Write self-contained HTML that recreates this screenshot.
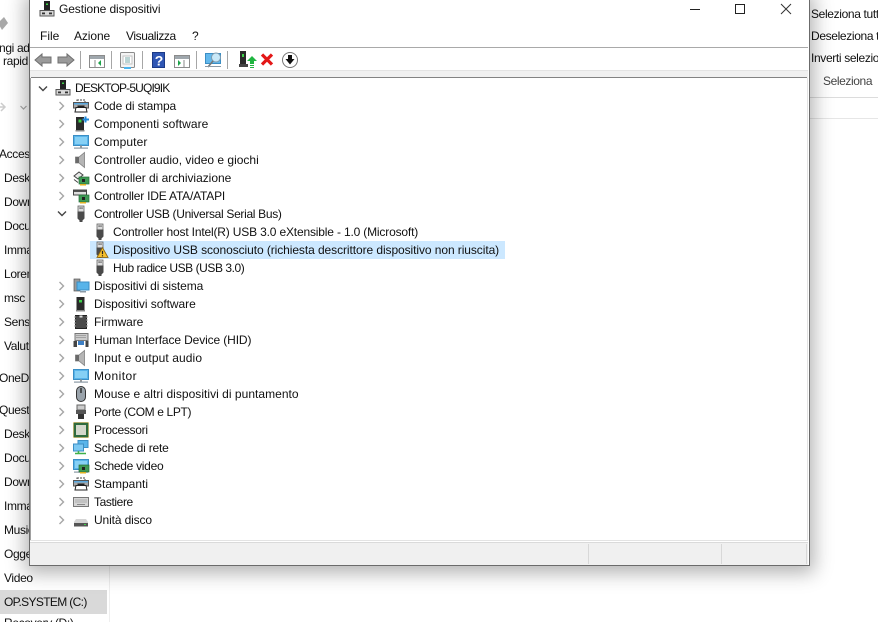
<!DOCTYPE html>
<html><head><meta charset="utf-8"><style>
html{margin:0;padding:0;background:#fff;width:878px;height:622px;overflow:hidden}
body{margin:0;padding:0;background:#fff}
#page{width:878px;height:622px;overflow:hidden;position:relative;font-family:"Liberation Sans",sans-serif;font-size:12px;color:#111}
.a{position:absolute;white-space:nowrap}
.t{position:absolute;white-space:nowrap;line-height:16px}
.l{letter-spacing:-.35px}
#win{position:absolute;left:29px;top:-5px;width:779px;height:569px;background:#fff;border:1px solid #6b6b6b;box-shadow:0 3px 18px 4px rgba(0,0,0,.3)}
svg{position:absolute;overflow:visible}
</style></head><body><div id="page">
<svg width="0" height="0" style="position:absolute"><defs>
<symbol id="pc" viewBox="0 0 16 16" overflow="visible"><rect x="5" y="0" width="6" height="9" fill="#222"/><rect x="7" y="2.500" width="2" height="1.500" fill="#3fd04a"/><path d="M1 9.500h14v5.500H1z" fill="#d8d8d8" stroke="#555"/><rect x="3" y="11.500" width="3" height="1.800" fill="#333"/><rect x="10" y="11.500" width="3" height="1.800" fill="#333"/></symbol>
<symbol id="printer" viewBox="0 0 16 16" overflow="visible"><rect x="4" y="2" width="8" height="3" fill="#fff" stroke="#444" stroke-dasharray="2 1"/><rect x=".5" y="4.500" width="15" height="5.500" fill="#a8a8a8" stroke="#555"/><rect x="1" y="5" width="14" height="1.500" fill="#5aa7dd"/><path d="M3 9.500h10l1 4.500H2z" fill="#fff" stroke="#222"/><rect x="4.500" y="7.500" width="7" height="2" fill="#222"/></symbol>
<symbol id="sw" viewBox="0 0 16 16" overflow="visible"><rect x="3" y="1" width="8" height="13" fill="#2a2a2a"/><rect x="5.500" y="3.500" width="3" height="3" fill="#3fd04a"/><rect x="2.500" y="14" width="9" height="1.500" fill="#888"/><path d="M12.500 .5v6M9.500 3.500h6.500" stroke="#1e88d8" stroke-width="2"/></symbol>
<symbol id="mon" viewBox="0 0 16 16" overflow="visible"><rect x=".5" y="1.500" width="15" height="10" fill="#58b4ea" stroke="#3b8ec4"/><rect x="2" y="3" width="12" height="7" fill="#86d0f5"/><rect x="7" y="11.500" width="2" height="2" fill="#9a9a9a"/><rect x="1" y="13.500" width="14" height="1.200" fill="#8b9aa6"/></symbol>
<symbol id="spk" viewBox="0 0 16 16" overflow="visible"><path d="M2.500 5h3.500L11.500 .5v15L6 11H2.500z" fill="#b5b5b5" stroke="#808080" stroke-width=".8"/><rect x="2.500" y="5" width="3.500" height="6" fill="#6a6a6a"/></symbol>
<symbol id="card" viewBox="0 0 16 16" overflow="visible"><rect x="6" y="7" width="10" height="7" fill="#3f9a55" stroke="#246b37" stroke-width=".7"/><rect x="9" y="9" width="3" height="3" fill="#222"/><rect x="7" y="14" width="6" height="1.500" fill="#e0b020"/></symbol>
<symbol id="stor" viewBox="0 0 16 16" overflow="visible"><path d="M1 6l5-4 4 3-5 4z" fill="#e8e8e8" stroke="#444"/><path d="M1 9.500l4 3" stroke="#444"/><use href="#card"/></symbol>
<symbol id="ide" viewBox="0 0 16 16" overflow="visible"><rect x=".5" y="2" width="13" height="5" fill="#dfdfdf" stroke="#444"/><rect x="1" y="2.500" width="12" height="1.500" fill="#555"/><use href="#card"/></symbol>
<symbol id="usb" viewBox="0 0 16 16" overflow="visible"><rect x="5" y="0" width="6" height="6" fill="#ddd" stroke="#666" stroke-width=".8"/><rect x="6.500" y="1.500" width="1.200" height="1.200" fill="#333"/><rect x="8.400" y="1.500" width="1.200" height="1.200" fill="#333"/><path d="M4.500 5.500h7v7l-2 2v1.500h-3V14.500l-2-2z" fill="#4a4a4a"/></symbol>
<symbol id="warn" viewBox="0 0 10 10" overflow="visible"><path d="M5 .5L10 9.500H0z" fill="#f6c02c" stroke="#8a6410" stroke-width=".8"/><path d="M5 3.500v3M5 7.500v1" stroke="#222" stroke-width="1.100"/></symbol>
<symbol id="sys" viewBox="0 0 16 16" overflow="visible"><rect x="1" y="1" width="6" height="12" fill="#9a9a9a" stroke="#555" stroke-width=".7"/><rect x="4" y="4" width="12" height="8" fill="#58b4ea" stroke="#3b8ec4"/><rect x="7" y="13" width="6" height="1.500" fill="#8b9aa6"/></symbol>
<symbol id="sd" viewBox="0 0 16 16" overflow="visible"><rect x="3.500" y="1" width="8" height="13" fill="#2a2a2a"/><rect x="6" y="4" width="3" height="2.500" fill="#3fd04a"/><rect x="3" y="14" width="9" height="1.500" fill="#888"/></symbol>
<symbol id="fw" viewBox="0 0 16 16" overflow="visible"><rect x="2.500" y="1.500" width="11" height="13" fill="#4a4a4a" stroke="#222"/><path d="M1 3h14M1 6h14M1 9h14M1 12h14" stroke="#aaa" stroke-dasharray="2 10"/><path d="M6.500 1.500h3v2h-3z" fill="#ddd"/></symbol>
<symbol id="hid" viewBox="0 0 16 16" overflow="visible"><rect x="2" y="1.500" width="13" height="7" fill="#ccc" stroke="#777"/><path d="M3.500 3.500h10M3.500 5.500h10" stroke="#777" stroke-dasharray="1 1"/><rect x=".5" y="9" width="3.500" height="6" fill="#444"/><rect x="12.500" y="9" width="3" height="6" fill="#444"/><rect x="5" y="9" width="6" height="4" fill="#3d7fc4"/></symbol>
<symbol id="mouse" viewBox="0 0 16 16" overflow="visible"><rect x="3.500" y=".5" width="9" height="15" rx="4.500" fill="#9aa3ab" stroke="#333"/><path d="M8 2v5" stroke="#333" stroke-width="1.500"/></symbol>
<symbol id="port" viewBox="0 0 16 16" overflow="visible"><rect x="4" y="1" width="8" height="5" fill="#ccc" stroke="#666"/><path d="M3 6h10v4H3z" fill="#555"/><path d="M5 10h6v5H5z" fill="#333"/></symbol>
<symbol id="cpu" viewBox="0 0 16 16" overflow="visible"><rect x=".5" y=".5" width="15" height="15" fill="#2f6b3e" stroke="#c9a43c" stroke-dasharray="1 1"/><rect x="3" y="3" width="10" height="10" fill="#d4d8cc"/></symbol>
<symbol id="net" viewBox="0 0 16 16" overflow="visible"><rect x="5" y=".5" width="10" height="7" fill="#58b4ea" stroke="#3b8ec4"/><rect x=".5" y="4" width="10" height="7" fill="#7cc8f2" stroke="#3b8ec4"/><path d="M5.500 11v2M2 13.500h11" stroke="#3fb04a" stroke-width="1.600"/></symbol>
<symbol id="vid" viewBox="0 0 16 16" overflow="visible"><use href="#mon"/><use href="#card"/></symbol>
<symbol id="kbd" viewBox="0 0 16 16" overflow="visible"><rect x=".5" y="3.500" width="15" height="9" fill="#d6d6d6" stroke="#777"/><path d="M2.500 6h11M2.500 8h11" stroke="#888" stroke-dasharray="1 1"/><path d="M4 10.500h8" stroke="#888"/></symbol>
<symbol id="disk" viewBox="0 0 16 16" overflow="visible"><path d="M3 7h10l2 3v4H1v-4z" fill="#d4d4d4"/><rect x="1" y="11" width="14" height="3.500" fill="#555"/><rect x="11" y="12" width="2" height="1" fill="#3fd04a"/></symbol>
<symbol id="cr" viewBox="0 0 8 10" overflow="visible"><path d="M1.500 1l4 4-4 4" fill="none" stroke="#a6a6a6" stroke-width="1.400"/></symbol>
<symbol id="cd" viewBox="0 0 10 8" overflow="visible"><path d="M1 1.500l4 4 4-4" fill="none" stroke="#444" stroke-width="1.400"/></symbol>
</defs></svg>

<!-- background explorer -->
<div class="a" style="left:810px;top:97px;width:68px;height:1px;background:#dcdcdc"></div>
<div class="a" style="left:810px;top:118px;width:68px;height:1px;background:#e6e6e6"></div>
<div class="a" style="left:109px;top:566px;width:1px;height:56px;background:#eee"></div>
<div class="a" style="left:0;top:590px;width:107px;height:24px;background:#d9d9d9"></div>
<svg style="left:0;top:10px" width="24" height="24"><path d="M-2 13l6-6 4 6-6 7z" fill="#a8a8a8"/></svg>
<svg style="left:0;top:100px" width="30" height="16"><path d="M-3 7h8M1 3l4 4-4 4" fill="none" stroke="#ccc" stroke-width="1.500"/><path d="M20.500 6l3 3 3-3" fill="none" stroke="#aaa" stroke-width="1.200"/></svg>
<div class="t l" style="left:-1px;top:40px">ngi ad</div>
<div class="t l" style="left:3px;top:53px">rapid</div>
<div class="t l" style="left:-1px;top:146px">Access</div>
<div class="t l" style="left:4px;top:170px">Desktop</div>
<div class="t l" style="left:4px;top:194px">Download</div>
<div class="t l" style="left:4px;top:218px">Documenti</div>
<div class="t l" style="left:4px;top:242px">Immagini</div>
<div class="t l" style="left:4px;top:266px">Lorem</div>
<div class="t l" style="left:4px;top:290px">msc</div>
<div class="t l" style="left:4px;top:314px">Sensori</div>
<div class="t l" style="left:4px;top:338px">Valutazioni</div>
<div class="t l" style="left:-1px;top:370px">OneDrive</div>
<div class="t l" style="left:-1px;top:402px">Questo PC</div>
<div class="t l" style="left:4px;top:426px">Desktop</div>
<div class="t l" style="left:4px;top:450px">Documenti</div>
<div class="t l" style="left:4px;top:474px">Download</div>
<div class="t l" style="left:4px;top:498px">Immagini</div>
<div class="t l" style="left:4px;top:522px">Musica</div>
<div class="t l" style="left:4px;top:546px">Oggetti 3D</div>
<div class="t l" style="left:4px;top:570px">Video</div>
<div class="t" style="left:4px;top:594px;letter-spacing:-.65px">OP.SYSTEM (C:)</div>
<div class="t l" style="left:4px;top:615px">Recovery (D:)</div>
<div class="t l" style="left:811px;top:6px">Seleziona tutto</div>
<div class="t l" style="left:811px;top:28px">Deseleziona tutto</div>
<div class="t l" style="left:811px;top:50px">Inverti selezione</div>
<div class="t" style="left:823px;top:73px;color:#444;letter-spacing:-.4px">Seleziona</div>

<!-- window -->
<div id="win"></div>
<div class="a" style="left:30px;top:47px;width:778px;height:1px;background:#a9a9a9"></div>
<div class="a" style="left:30px;top:70px;width:778px;height:8px;background:#f0f0f0;border-top:1px solid #e3e3e3;box-sizing:border-box"></div>
<div class="a" style="left:31px;top:77px;width:776px;height:1px;background:#828282"></div>
<div class="a" style="left:30px;top:78px;width:1px;height:463px;background:#a0a0a0"></div>
<div class="a" style="left:807px;top:78px;width:1px;height:463px;background:#e3e3e3"></div>
<div class="a" style="left:30px;top:540px;width:778px;height:25px;background:#f0f0f0;border-top:1px solid #e3e3e3;box-sizing:border-box"></div>
<div class="a" style="left:30px;top:541px;width:778px;height:1px;background:#fff"></div>
<div class="a" style="left:30px;top:542px;width:778px;height:1px;background:#dadada"></div>
<div class="a" style="left:588px;top:544px;width:1px;height:20px;background:#d8d8d8"></div>
<div class="a" style="left:721px;top:544px;width:1px;height:20px;background:#d8d8d8"></div>
<div class="a" style="left:806px;top:544px;width:1px;height:20px;background:#d8d8d8"></div>

<svg style="left:39px;top:1px" width="16" height="16"><use href="#pc" width="16" height="16"/></svg>
<div class="t" style="left:59px;top:1px;letter-spacing:-.1px">Gestione dispositivi</div>
<svg style="left:690px;top:0" width="110" height="16"><path d="M0 9.500h10" stroke="#222"/><rect x="45.500" y="4.500" width="9" height="9" fill="none" stroke="#222"/><path d="M91 4l10 10M101 4l-10 10" stroke="#333" fill="none"/></svg>
<div class="t" style="left:40px;top:28px">File</div>
<div class="t" style="left:74px;top:28px;letter-spacing:-.1px">Azione</div>
<div class="t" style="left:126px;top:28px;letter-spacing:-.4px">Visualizza</div>
<div class="t" style="left:192px;top:28px">?</div>

<!-- toolbar -->
<svg style="left:30px;top:48px" width="290" height="24">
<path d="M5 12l7-6v3h9v6h-9v3z" fill="#9a9a9a" stroke="#6f6f6f"/>
<path d="M44 12l-7-6v3h-9v6h9v3z" fill="#9a9a9a" stroke="#6f6f6f"/>
<path d="M50.500 3v18M81.500 3v18M112.500 3v18M166.500 3v18M197.500 3v18" stroke="#a6a6a6"/>
<g><rect x="59.500" y="7.500" width="15" height="12" fill="#fff" stroke="#8b8b8b"/><rect x="60" y="8" width="14" height="3" fill="#9fa7ad"/><path d="M65 12v7" stroke="#8b8b8b"/><path d="M71 12l-3 3 3 3z" fill="#1ea34a"/></g>
<g><rect x="90.500" y="4.500" width="14" height="15" rx="1" fill="#f4f4f4" stroke="#8b8b8b"/><rect x="93" y="8" width="9" height="8" fill="#fff" stroke="#c2c2c2"/><path d="M95 10h5M95 12h5M95 14h5" stroke="#7aa"/><rect x="94" y="19" width="7" height="2" fill="#4db5ef"/></g>
<g><rect x="122.500" y="4.500" width="12" height="15" fill="#2f56b4" stroke="#1c3a87"/><text x="124.800" y="17.500" font-family="Liberation Sans,sans-serif" font-size="14" font-weight="bold" fill="#fff">?</text></g>
<g><rect x="144.500" y="7.500" width="15" height="12" fill="#fff" stroke="#8b8b8b"/><rect x="145" y="8" width="14" height="3" fill="#9fa7ad"/><path d="M154 12v7" stroke="#8b8b8b"/><path d="M148 12l3 3-3 3z" fill="#1ea34a"/></g>
<g><rect x="175.500" y="5.500" width="15" height="10" fill="#62b8ec" stroke="#3b8ec4"/><circle cx="186" cy="9.500" r="4.500" fill="#c8e8f8" stroke="#7e9aad"/><path d="M183 13l-5 6" stroke="#777" stroke-width="1.600"/><path d="M175 18.500h16" stroke="#8b9aa6"/></g>
<g><rect x="210" y="3" width="6" height="13" fill="#2a2a2a"/><rect x="212" y="6" width="2" height="3" fill="#3fd04a"/><rect x="209" y="16" width="9" height="3" fill="#444"/><path d="M222 8l5 5h-3v3h-4v-3h-3z" fill="#1fb540"/><path d="M220 17.500h4M220 19.500h4" stroke="#1fb540"/></g>
<path d="M232 6.500l10 10M242 6.500l-10 10" stroke="#e31717" stroke-width="3.200"/>
<g><circle cx="260" cy="12" r="7.500" fill="#fff" stroke="#777"/><path d="M258 7h4v4h2.500L260 16.500 255.500 11H258z" fill="#111"/></g>
</svg>

<!-- tree -->
<div class="a" style="left:90px;top:241px;width:415px;height:18px;background:#cce8ff"></div>
<svg style="left:38px;top:85px" width="10" height="8"><use href="#cd" width="10" height="8"/></svg>
<svg style="left:55px;top:80px" width="16" height="16"><use href="#pc" width="16" height="16"/></svg>
<div class="t" style="left:75px;top:80px;letter-spacing:-.85px">DESKTOP-5UQI9IK</div>

<svg style="left:58px;top:101px" width="8" height="10"><use href="#cr" width="8" height="10"/></svg>
<svg style="left:58px;top:119px" width="8" height="10"><use href="#cr" width="8" height="10"/></svg>
<svg style="left:58px;top:137px" width="8" height="10"><use href="#cr" width="8" height="10"/></svg>
<svg style="left:58px;top:155px" width="8" height="10"><use href="#cr" width="8" height="10"/></svg>
<svg style="left:58px;top:173px" width="8" height="10"><use href="#cr" width="8" height="10"/></svg>
<svg style="left:58px;top:191px" width="8" height="10"><use href="#cr" width="8" height="10"/></svg>
<svg style="left:57px;top:210px" width="10" height="8"><use href="#cd" width="10" height="8"/></svg>
<svg style="left:58px;top:281px" width="8" height="10"><use href="#cr" width="8" height="10"/></svg>
<svg style="left:58px;top:299px" width="8" height="10"><use href="#cr" width="8" height="10"/></svg>
<svg style="left:58px;top:317px" width="8" height="10"><use href="#cr" width="8" height="10"/></svg>
<svg style="left:58px;top:335px" width="8" height="10"><use href="#cr" width="8" height="10"/></svg>
<svg style="left:58px;top:353px" width="8" height="10"><use href="#cr" width="8" height="10"/></svg>
<svg style="left:58px;top:371px" width="8" height="10"><use href="#cr" width="8" height="10"/></svg>
<svg style="left:58px;top:389px" width="8" height="10"><use href="#cr" width="8" height="10"/></svg>
<svg style="left:58px;top:407px" width="8" height="10"><use href="#cr" width="8" height="10"/></svg>
<svg style="left:58px;top:425px" width="8" height="10"><use href="#cr" width="8" height="10"/></svg>
<svg style="left:58px;top:443px" width="8" height="10"><use href="#cr" width="8" height="10"/></svg>
<svg style="left:58px;top:461px" width="8" height="10"><use href="#cr" width="8" height="10"/></svg>
<svg style="left:58px;top:479px" width="8" height="10"><use href="#cr" width="8" height="10"/></svg>
<svg style="left:58px;top:497px" width="8" height="10"><use href="#cr" width="8" height="10"/></svg>
<svg style="left:58px;top:515px" width="8" height="10"><use href="#cr" width="8" height="10"/></svg>

<svg style="left:73px;top:98px" width="16" height="16"><use href="#printer" width="16" height="16"/></svg><div class="t" style="left:94px;top:98px;letter-spacing:-.14px">Code di stampa</div>
<svg style="left:73px;top:116px" width="16" height="16"><use href="#sw" width="16" height="16"/></svg><div class="t" style="left:94px;top:116px;letter-spacing:.05px">Componenti software</div>
<svg style="left:73px;top:134px" width="16" height="16"><use href="#mon" width="16" height="16"/></svg><div class="t" style="left:94px;top:134px;letter-spacing:.1px">Computer</div>
<svg style="left:73px;top:152px" width="16" height="16"><use href="#spk" width="16" height="16"/></svg><div class="t" style="left:94px;top:152px">Controller audio, video e giochi</div>
<svg style="left:73px;top:170px" width="16" height="16"><use href="#stor" width="16" height="16"/></svg><div class="t" style="left:94px;top:170px;letter-spacing:-.03px">Controller di archiviazione</div>
<svg style="left:73px;top:188px" width="16" height="16"><use href="#ide" width="16" height="16"/></svg><div class="t" style="left:94px;top:188px;letter-spacing:-.2px">Controller IDE ATA/ATAPI</div>
<svg style="left:73px;top:206px" width="16" height="16"><use href="#usb" width="16" height="16"/></svg><div class="t" style="left:94px;top:206px;letter-spacing:-.32px">Controller USB (Universal Serial Bus)</div>
<svg style="left:92px;top:224px" width="16" height="16"><use href="#usb" width="16" height="16"/></svg><div class="t" style="left:113px;top:224px;letter-spacing:-.17px">Controller host Intel(R) USB 3.0 eXtensible - 1.0 (Microsoft)</div>
<svg style="left:92px;top:242px" width="16" height="16"><use href="#usb" width="16" height="16"/></svg><svg style="left:97px;top:247px" width="11" height="11"><use href="#warn" width="11" height="11"/></svg><div class="t" style="left:113px;top:242px;letter-spacing:-.08px">Dispositivo USB sconosciuto (richiesta descrittore dispositivo non riuscita)</div>
<svg style="left:92px;top:260px" width="16" height="16"><use href="#usb" width="16" height="16"/></svg><div class="t" style="left:113px;top:260px;letter-spacing:-.45px">Hub radice USB (USB 3.0)</div>
<svg style="left:73px;top:278px" width="16" height="16"><use href="#sys" width="16" height="16"/></svg><div class="t" style="left:94px;top:278px;letter-spacing:-.1px">Dispositivi di sistema</div>
<svg style="left:73px;top:296px" width="16" height="16"><use href="#sd" width="16" height="16"/></svg><div class="t" style="left:94px;top:296px;letter-spacing:-.05px">Dispositivi software</div>
<svg style="left:73px;top:314px" width="16" height="16"><use href="#fw" width="16" height="16"/></svg><div class="t" style="left:94px;top:314px;letter-spacing:-.1px">Firmware</div>
<svg style="left:73px;top:332px" width="16" height="16"><use href="#hid" width="16" height="16"/></svg><div class="t" style="left:94px;top:332px;letter-spacing:-.12px">Human Interface Device (HID)</div>
<svg style="left:73px;top:350px" width="16" height="16"><use href="#spk" width="16" height="16"/></svg><div class="t" style="left:94px;top:350px;letter-spacing:.1px">Input e output audio</div>
<svg style="left:73px;top:368px" width="16" height="16"><use href="#mon" width="16" height="16"/></svg><div class="t" style="left:94px;top:368px;letter-spacing:.43px">Monitor</div>
<svg style="left:73px;top:386px" width="16" height="16"><use href="#mouse" width="16" height="16"/></svg><div class="t" style="left:94px;top:386px;letter-spacing:.03px">Mouse e altri dispositivi di puntamento</div>
<svg style="left:73px;top:404px" width="16" height="16"><use href="#port" width="16" height="16"/></svg><div class="t" style="left:94px;top:404px;letter-spacing:-.37px">Porte (COM e LPT)</div>
<svg style="left:73px;top:422px" width="16" height="16"><use href="#cpu" width="16" height="16"/></svg><div class="t" style="left:94px;top:422px;letter-spacing:-.3px">Processori</div>
<svg style="left:73px;top:440px" width="16" height="16"><use href="#net" width="16" height="16"/></svg><div class="t" style="left:94px;top:440px;letter-spacing:-.2px">Schede di rete</div>
<svg style="left:73px;top:458px" width="16" height="16"><use href="#vid" width="16" height="16"/></svg><div class="t" style="left:94px;top:458px;letter-spacing:-.28px">Schede video</div>
<svg style="left:73px;top:476px" width="16" height="16"><use href="#printer" width="16" height="16"/></svg><div class="t" style="left:94px;top:476px">Stampanti</div>
<svg style="left:73px;top:494px" width="16" height="16"><use href="#kbd" width="16" height="16"/></svg><div class="t" style="left:94px;top:494px;letter-spacing:-.4px">Tastiere</div>
<svg style="left:73px;top:512px" width="16" height="16"><use href="#disk" width="16" height="16"/></svg><div class="t" style="left:94px;top:512px;letter-spacing:-.13px">Unità disco</div>
</div></body></html>
